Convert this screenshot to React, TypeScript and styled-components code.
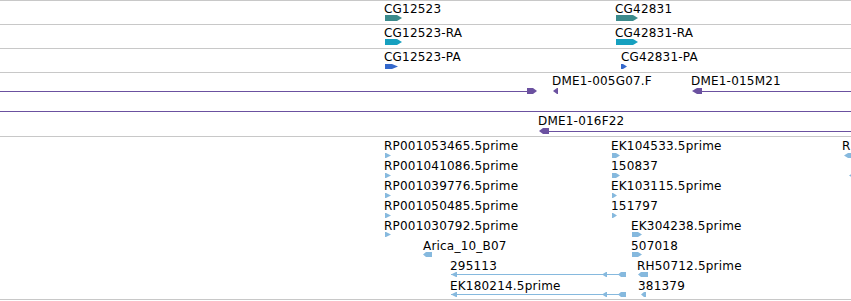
import React from 'react';
import styled, { createGlobalStyle } from 'styled-components';

const GRID = '#c8c8c8';
const GENE = '#3b8b8c';
const MRNA = '#16a0bf';
const CDS = '#3468cc';
const BAC = '#6b51a0';
const EST = '#86b9de';

const GlobalStyle = createGlobalStyle`
  html, body {
    margin: 0;
    padding: 0;
    background: #fff;
    overflow: hidden;
  }
  body {
    font-family: 'DejaVu Sans', 'Liberation Sans', sans-serif;
    font-size: 12px;
    color: #000;
  }
`;

const Browser = styled.div`
  width: 851px;
  height: 301px;
  display: flex;
  flex-direction: column;
  border-top: 1px solid ${GRID};
  overflow: hidden;
`;

const Track = styled.div<{ $h: number }>`
  position: relative;
  flex: none;
  height: ${p => p.$h}px;
  border-bottom: 1px solid ${GRID};
  overflow: hidden;
`;

// feature name, drawn just above its glyph
const Label = styled.span`
  position: absolute;
  white-space: nowrap;
  line-height: 14px;
  font-size: 12px;
  letter-spacing: 0.2px;
  color: #000;
`;

const GlyphSvg = styled.svg`
  position: absolute;
  display: block;
  overflow: visible;
`;

type Part =
  | { kind: 'line'; a: number; b: number }
  | { kind: 'arrow'; a: number; b: number; dir: 'l' | 'r'; tip: number };

type Feat = {
  label?: string;
  lx?: number;
  ly?: number;
  gy: number;
  gh: number;
  color: string;
  parts: Part[];
};

const line = (a: number, b: number): Part => ({ kind: 'line', a, b });
const arrow = (a: number, b: number, dir: 'l' | 'r', tip: number): Part => ({ kind: 'arrow', a, b, dir, tip });

// a feature glyph: thin line plus arrow-shaped exon boxes
const Glyph: React.FC<{ f: Feat }> = ({ f }) => {
  const min = Math.min(...f.parts.map(p => p.a));
  const max = Math.max(...f.parts.map(p => p.b));
  const h = f.gh;
  const mid = Math.floor(h / 2);
  return (
    <GlyphSvg width={max - min} height={h} style={{ left: min, top: f.gy }}>
      {f.parts.map((p, i) => {
        const a = p.a - min;
        const b = p.b - min;
        if (p.kind === 'line') {
          return <rect key={i} x={a} y={mid} width={b - a} height={1} fill={f.color} shapeRendering="crispEdges" />;
        }
        const pts =
          p.dir === 'r'
            ? `${a},0 ${b - p.tip},0 ${b},${h / 2} ${b - p.tip},${h} ${a},${h}`
            : `${b},0 ${a + p.tip},0 ${a},${h / 2} ${a + p.tip},${h} ${b},${h}`;
        return <polygon key={i} points={pts} fill={f.color} />;
      })}
    </GlyphSvg>
  );
};

const estRow = (k: number) => ({ ly: 20 * k + 2, gy: 20 * k + (k < 4 ? 16 : 15), gh: 5 });

const rp = ['RP001053465.5prime', 'RP001041086.5prime', 'RP001039776.5prime', 'RP001050485.5prime', 'RP001030792.5prime'];

const estFeats: Feat[] = [
  ...rp.map((label, k) => ({ label, lx: 384, ...estRow(k), color: EST, parts: [arrow(385, 391, 'r', 5)] })),
  { label: 'Arica_10_B07', lx: 423, ...estRow(5), color: EST, parts: [arrow(423, 432, 'l', 3)] },
  ...['295113', 'EK180214.5prime'].map((label, i) => ({
    label,
    lx: 450,
    ...estRow(6 + i),
    color: EST,
    parts: [line(451, 626), arrow(451, 457, 'l', 5), arrow(602, 607, 'l', 4), arrow(618, 626, 'l', 3)],
  })),
  { label: 'EK104533.5prime', lx: 611, ...estRow(0), color: EST, parts: [arrow(612, 620, 'r', 4)] },
  { label: '150837', lx: 611, ...estRow(1), color: EST, parts: [arrow(612, 620, 'r', 4)] },
  { label: 'EK103115.5prime', lx: 611, ...estRow(2), color: EST, parts: [arrow(612, 617, 'r', 4)] },
  { label: '151797', lx: 611, ...estRow(3), color: EST, parts: [arrow(612, 617, 'r', 4)] },
  { label: 'EK304238.5prime', lx: 631, ...estRow(4), color: EST, parts: [arrow(632, 642, 'r', 4)] },
  { label: '507018', lx: 631, ...estRow(5), color: EST, parts: [arrow(632, 642, 'r', 4)] },
  { label: 'RH50712.5prime', lx: 637, ...estRow(6), color: EST, parts: [arrow(638, 648, 'l', 3)] },
  { label: '381379', lx: 638, ...estRow(7), color: EST, parts: [arrow(641, 646, 'l', 3)] },
  { label: 'R', lx: 842, ...estRow(0), color: EST, parts: [arrow(844, 858, 'l', 4)] },
  { ...estRow(1), color: EST, parts: [arrow(849, 860, 'l', 4)] },
];

const tracks: { h: number; feats: Feat[] }[] = [
  {
    h: 23,
    feats: [
      { label: 'CG12523', lx: 384, ly: 1, gy: 14, gh: 6, color: GENE, parts: [arrow(385, 402, 'r', 5)] },
      { label: 'CG42831', lx: 615, ly: 1, gy: 14, gh: 6, color: GENE, parts: [arrow(616, 638, 'r', 5)] },
    ],
  },
  {
    h: 23,
    feats: [
      { label: 'CG12523-RA', lx: 384, ly: 1, gy: 14, gh: 6, color: MRNA, parts: [arrow(385, 402, 'r', 5)] },
      { label: 'CG42831-RA', lx: 615, ly: 1, gy: 14, gh: 6, color: MRNA, parts: [arrow(616, 638, 'r', 5)] },
    ],
  },
  {
    h: 23,
    feats: [
      { label: 'CG12523-PA', lx: 384, ly: 1, gy: 15, gh: 5, color: CDS, parts: [arrow(385, 398, 'r', 6)] },
      { label: 'CG42831-PA', lx: 621, ly: 1, gy: 15, gh: 5, color: CDS, parts: [arrow(621, 627, 'r', 4)] },
    ],
  },
  {
    h: 63,
    feats: [
      { gy: 15, gh: 6, color: BAC, parts: [line(0, 530), arrow(527, 537, 'r', 4)] },
      { label: 'DME1-005G07.F', lx: 552, ly: 1, gy: 15, gh: 6, color: BAC, parts: [arrow(553, 558, 'l', 4)] },
      { label: 'DME1-015M21', lx: 691, ly: 1, gy: 15, gh: 6, color: BAC, parts: [arrow(692, 702, 'l', 5), line(700, 851)] },
      { gy: 35, gh: 6, color: BAC, parts: [line(0, 851)] },
      { label: 'DME1-016F22', lx: 538, ly: 41, gy: 55, gh: 6, color: BAC, parts: [arrow(539, 549, 'l', 4), line(547, 851)] },
    ],
  },
  { h: 162, feats: estFeats },
];

export default function App() {
  return (
    <>
      <GlobalStyle />
      <Browser>
        {tracks.map((t, i) => (
          <Track key={i} $h={t.h}>
            {t.feats.map((f, j) => (
              <React.Fragment key={j}>
                {f.label && <Label style={{ left: f.lx, top: f.ly }}>{f.label}</Label>}
                <Glyph f={f} />
              </React.Fragment>
            ))}
          </Track>
        ))}
      </Browser>
    </>
  );
}
